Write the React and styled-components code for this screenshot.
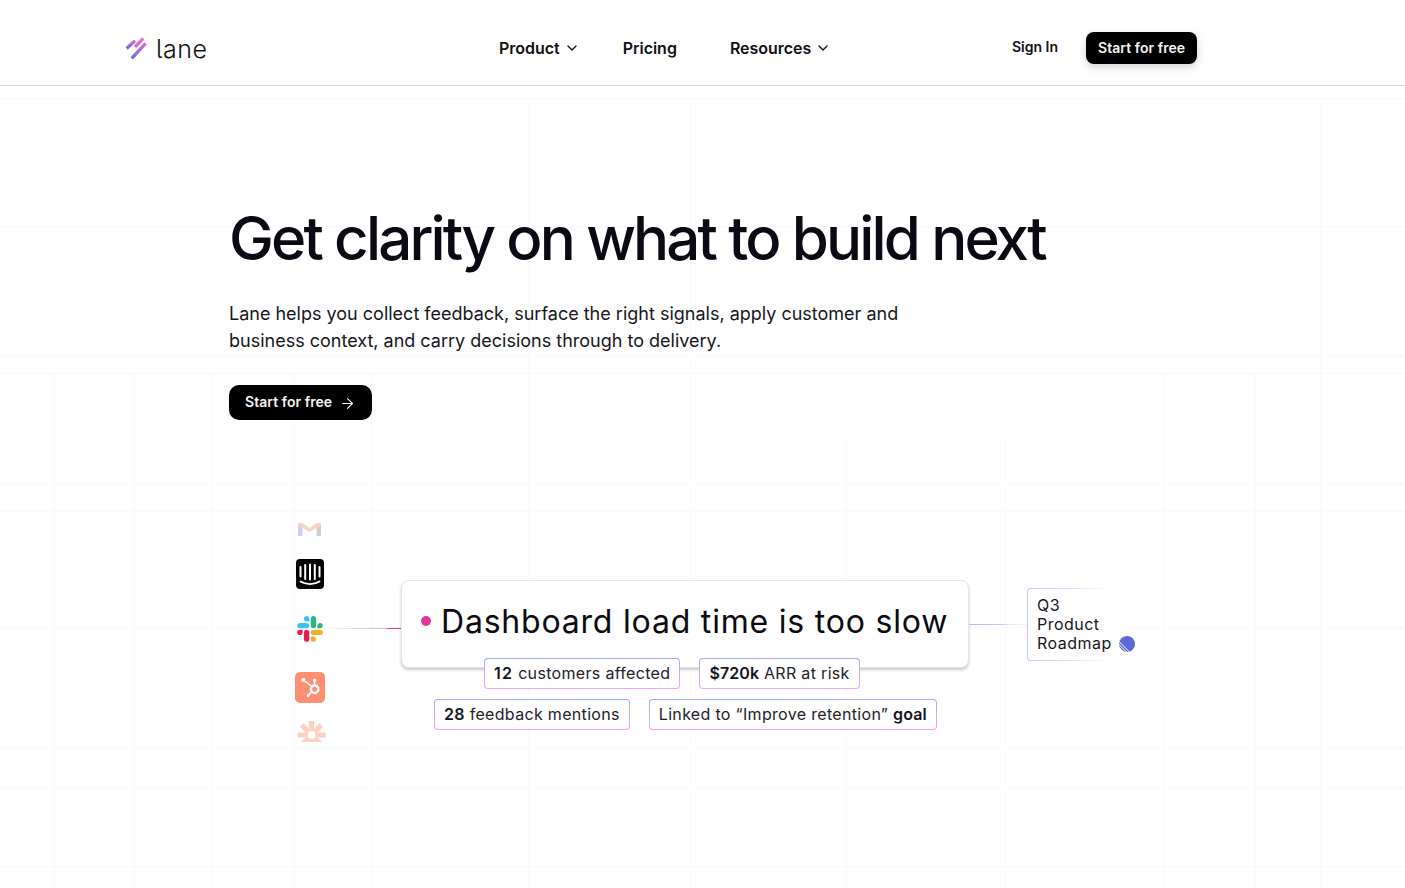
import React from 'react';
import styled, { createGlobalStyle } from 'styled-components';
import { ChevronDown, ArrowRight } from 'lucide-react';
import { SiHubspot } from 'react-icons/si';

const verticalLines = [
  { x: 54, from: 373 },
  { x: 134, from: 373 },
  { x: 212, from: 373 },
  { x: 294, from: 373 },
  { x: 371, from: 373 },
  { x: 528, from: 98 },
  { x: 690, from: 98 },
  { x: 846, from: 440 },
  { x: 1005, from: 440 },
  { x: 1163, from: 373 },
  { x: 1255, from: 373 },
  { x: 1320, from: 98 },
];
const horizontalLines = [98, 226, 355, 373, 483, 511, 627, 748, 787, 866];
const gridColor = '#fafafa';

const gridImages = [...verticalLines, ...horizontalLines]
  .map(() => `linear-gradient(${gridColor}, ${gridColor})`)
  .join(', ');
const gridSizes = [
  ...verticalLines.map(() => '1px 100%'),
  ...horizontalLines.map(() => '100% 1px'),
].join(', ');
const gridPositions = [
  ...verticalLines.map((l) => `${l.x}px ${l.from}px`),
  ...horizontalLines.map((y) => `0 ${y}px`),
].join(', ');

const GlobalStyle = createGlobalStyle`
  html, body {
    margin: 0;
    padding: 0;
    background: #fff;
  }
  body {
    font-family: Inter, "Liberation Sans", sans-serif;
    color: #0b0b12;
  }
`;

const Page = styled.div`
  width: 1405px;
  height: 888px;
  overflow: hidden;
  background-color: #fff;
  background-image: ${gridImages};
  background-size: ${gridSizes};
  background-position: ${gridPositions};
  background-repeat: no-repeat;
`;

const Nav = styled.nav`
  height: 86px;
  box-sizing: border-box;
  border-bottom: 1px solid #d9d9d9;
  background: #fff;
  display: flex;
  align-items: center;
  padding: 11px 0 0 125px;
`;

const Logo = styled.div`
  display: flex;
  align-items: center;
  gap: 8px;
  width: 374px;
`;

const LogoText = styled.span`
  font-family: Inter, sans-serif;
  font-feature-settings: 'cv05';
  font-size: 25px;
  font-weight: 300;
  letter-spacing: 0.5px;
  color: #111;
  line-height: 30px;
  padding-top: 2px;
`;

const NavLinks = styled.div`
  display: flex;
  align-items: center;
  gap: 43px;
  width: 513px;
`;

const NavLink = styled.a`
  display: flex;
  align-items: center;
  gap: 4px;
  font-size: 16px;
  font-weight: 600;
  letter-spacing: -0.02px;
  color: #111;
  margin-right: ${(p) => (p.$wide ? '10px' : '0')};
`;

const NavActions = styled.div`
  display: flex;
  align-items: center;
  gap: 28px;
`;

const SignIn = styled.a`
  font-size: 14px;
  font-weight: 600;
  color: #111;
  margin-top: -3px;
`;

const Button = styled.a`
  display: inline-flex;
  align-items: center;
  box-sizing: border-box;
  background: #000;
  color: #f4f4f4;
  font-size: 14px;
  font-weight: 600;
  letter-spacing: 0.05px;
`;

const NavButton = styled(Button)`
  height: 32px;
  padding: 0 12px 2px;
  border-radius: 8px;
  box-shadow: 0 3px 8px rgba(0, 0, 0, 0.18);
`;

const HeroButton = styled(Button)`
  height: 35px;
  padding: 0 16px 2px;
  border-radius: 10px;
  gap: 7px;
  svg {
    margin-top: 4px;
  }
`;

const Hero = styled.section`
  padding: 118px 0 0 229px;
`;

const Title = styled.h1`
  margin: 0;
  font-size: 60px;
  font-weight: 500;
  line-height: 68px;
  letter-spacing: -0.0475em;
  color: #0a0a14;
`;

const Lead = styled.p`
  margin: 28px 0 0;
  width: 720px;
  font-size: 18px;
  line-height: 27px;
  color: #16161d;
`;

const HeroAction = styled.div`
  margin-top: 31px;
`;

const Diagram = styled.section`
  display: flex;
  align-items: flex-start;
  margin-top: 103px;
  padding-left: 295px;
`;

const Sources = styled.div`
  width: 30px;
  height: 224px;
  position: relative;
`;

const SourceIcon = styled.div`
  position: absolute;
  left: ${(p) => p.$x}px;
  top: ${(p) => p.$y}px;
  display: flex;
`;

const HubTile = styled.div`
  width: 30px;
  height: 31px;
  border-radius: 5px;
  background: #ff8f73;
  color: #fff;
  display: flex;
  align-items: center;
  justify-content: center;
`;

const Link = styled.div`
  width: ${(p) => p.$w}px;
  height: 1px;
  margin-top: ${(p) => p.$top}px;
  background: ${(p) => p.$fill};
`;

const CardColumn = styled.div`
  width: 568px;
  padding-top: 57px;
`;

const Card = styled.div`
  height: 88px;
  box-sizing: border-box;
  background: #fff;
  border: 1px solid #e6e6e6;
  border-radius: 8px;
  box-shadow: 0 2px 3px rgba(0, 0, 0, 0.22);
  display: flex;
  align-items: center;
  padding: 0 10px 6px 19px;
  gap: 10px;
`;

const Dot = styled.span`
  width: 10px;
  height: 10px;
  border-radius: 50%;
  background: #e0359a;
`;

const CardTitle = styled.div`
  font-size: 32px;
  font-weight: 400;
  letter-spacing: 0.025em;
  white-space: nowrap;
  color: #0a0a0f;
`;

const ChipRow = styled.div`
  display: flex;
  gap: 19px;
  padding-left: ${(p) => p.$indent}px;
  margin-top: ${(p) => p.$top}px;
  position: relative;
`;

const Chip = styled.div`
  height: 31px;
  box-sizing: border-box;
  padding: 0 9px;
  line-height: 29px;
  font-size: 16px;
  letter-spacing: 0.02em;
  white-space: nowrap;
  color: #22222a;
  border: 1px solid transparent;
  border-radius: 4px;
  background:
    linear-gradient(#fff, #fff) padding-box,
    linear-gradient(#a3a8ff, #ff9ff2) border-box;
  b {
    font-weight: 600;
    letter-spacing: ${(p) => p.$strong || '0.32px'};
    color: #14141c;
  }
`;

const Roadmap = styled.div`
  width: 98px;
  height: 73px;
  box-sizing: border-box;
  margin-top: 65px;
  padding: 7px 0 0 9px;
  font-size: 16px;
  line-height: 19.2px;
  letter-spacing: 0.03em;
  color: #16161d;
  border: 1px solid transparent;
  border-radius: 4px;
  background:
    linear-gradient(#fff, #fff) padding-box,
    linear-gradient(90deg, #c6c3ff 0%, #e9e8ff 60%, #fff 85%) border-box;
`;

const RoadmapLine = styled.div`
  display: flex;
  align-items: center;
  gap: 7px;
  white-space: nowrap;
  svg {
    flex-shrink: 0;
  }
`;

function LaneMark() {
  return (
    <svg width="23" height="23" viewBox="0 0 23 23" fill="none">
      <defs>
        <linearGradient id="lane-a" x1="0" y1="1" x2="1" y2="0">
          <stop offset="0" stopColor="#6a6fe6" />
          <stop offset="1" stopColor="#e56cc8" />
        </linearGradient>
        <linearGradient id="lane-b" x1="0" y1="1" x2="1" y2="0">
          <stop offset="0" stopColor="#c76bd8" />
          <stop offset="1" stopColor="#ea6fc6" />
        </linearGradient>
      </defs>
      <g strokeWidth="3.300">
        <path d="M1.700 11.500 10 3.800" stroke="url(#lane-a)" />
        <path d="M10 9.800 18.300 1.400" stroke="url(#lane-b)" />
        <path d="M6.700 21.400 20.700 6.400" stroke="url(#lane-a)" />
      </g>
    </svg>
  );
}

function GmailIcon() {
  return (
    <svg width="23" height="13" viewBox="0 0 23 13">
      <rect x="0" y="0" width="4.500" height="13" fill="#d4c8fa" />
      <rect x="18.500" y="0" width="4.500" height="13" fill="#cfcfcf" />
      <path d="M0 0h4.500l7 5L18.500 0H23v2.500l-11.500 6.500L0 2.500z" fill="#fbd3c4" />
    </svg>
  );
}

function IntercomIcon() {
  return (
    <svg width="28" height="30" viewBox="0 0 28 30">
      <rect width="28" height="30" rx="4" fill="#000" />
      <g stroke="#fff" strokeWidth="2" strokeLinecap="round">
        <path d="M4.500 8v9.500" />
        <path d="M9.200 6v14" />
        <path d="M14 5.500v15" />
        <path d="M18.800 6v14" />
        <path d="M23.500 8v9.500" />
      </g>
      <path d="M4.500 22.500c5.500 3.400 13.500 3.400 19 0" stroke="#fff" strokeWidth="1.800" strokeLinecap="round" fill="none" />
    </svg>
  );
}

function SlackIcon() {
  return (
    <svg width="26" height="26" viewBox="0 0 127 127">
      <path fill="#E01E5A" d="M27.200 80c0 7.300-5.900 13.200-13.200 13.200C6.700 93.200.8 87.300.8 80c0-7.300 5.900-13.200 13.200-13.200h13.200V80zm6.600 0c0-7.300 5.900-13.200 13.200-13.200 7.300 0 13.200 5.900 13.200 13.200v33c0 7.300-5.900 13.200-13.200 13.200-7.300 0-13.200-5.900-13.200-13.200V80z" />
      <path fill="#36C5F0" d="M47 27c-7.300 0-13.200-5.900-13.200-13.200C33.800 6.500 39.700.6 47 .6c7.300 0 13.200 5.900 13.200 13.200V27H47zm0 6.700c7.300 0 13.200 5.900 13.200 13.200 0 7.300-5.900 13.200-13.200 13.200H13.900C6.600 60.100.7 54.200.7 46.900c0-7.300 5.900-13.200 13.200-13.200H47z" />
      <path fill="#2EB67D" d="M99.900 46.900c0-7.300 5.900-13.200 13.200-13.200 7.300 0 13.200 5.900 13.200 13.200 0 7.300-5.900 13.200-13.200 13.200H99.900V46.900zm-6.600 0c0 7.300-5.900 13.200-13.200 13.200-7.300 0-13.200-5.900-13.200-13.200V13.800C66.900 6.500 72.800.6 80.100.6c7.300 0 13.200 5.900 13.200 13.200v33.100z" />
      <path fill="#ECB22E" d="M80.100 99.800c7.300 0 13.200 5.900 13.200 13.200 0 7.300-5.900 13.200-13.200 13.200-7.300 0-13.200-5.900-13.200-13.200V99.800h13.200zm0-6.600c-7.300 0-13.200-5.900-13.200-13.200 0-7.300 5.900-13.200 13.200-13.200h33.100c7.300 0 13.200 5.900 13.200 13.200 0 7.300-5.900 13.200-13.200 13.200H80.100z" />
    </svg>
  );
}

function ZapierIcon() {
  return (
    <svg width="29" height="21" viewBox="0 0 29 21">
      <g stroke="#fbd0c0" strokeWidth="5">
        <path d="M14.500 0v28" />
        <path d="M0.500 14h28" />
        <path d="M4.600 4.100l19.800 19.800" />
        <path d="M24.400 4.100L4.600 23.900" />
      </g>
      <circle cx="14.500" cy="14" r="6.500" fill="#fbd0c0" />
      <rect x="10.800" y="10.300" width="7.400" height="7.400" rx="2.500" fill="#fff" />
    </svg>
  );
}

function LinearIcon() {
  return (
    <svg width="16" height="16" viewBox="0 0 16 16">
      <circle cx="8" cy="8" r="8" fill="#5e6ad2" />
      <g stroke="#fff" strokeWidth="1">
        <path d="M-1 4.500 11.500 17" />
        <path d="M-1 7.500 8.500 17" />
        <path d="M-1 10.500 5.500 17" />
      </g>
    </svg>
  );
}

export default function App() {
  return (
    <Page>
      <GlobalStyle />
      <Nav>
        <Logo>
          <LaneMark />
          <LogoText>lane</LogoText>
        </Logo>
        <NavLinks>
          <NavLink>Product <ChevronDown size={16} strokeWidth={2} /></NavLink>
          <NavLink $wide>Pricing</NavLink>
          <NavLink>Resources <ChevronDown size={16} strokeWidth={2} /></NavLink>
        </NavLinks>
        <NavActions>
          <SignIn>Sign In</SignIn>
          <NavButton>Start for free</NavButton>
        </NavActions>
      </Nav>

      <Hero>
        <Title>Get clarity on what to build next</Title>
        <Lead>
          Lane helps you collect feedback, surface the right signals, apply customer and
          business context, and carry decisions through to delivery.
        </Lead>
        <HeroAction>
          <HeroButton>Start for free <ArrowRight size={17} strokeWidth={1.6} /></HeroButton>
        </HeroAction>
      </Hero>

      <Diagram>
        <Sources>
          <SourceIcon $x={3} $y={0}><GmailIcon /></SourceIcon>
          <SourceIcon $x={1} $y={36}><IntercomIcon /></SourceIcon>
          <SourceIcon $x={2} $y={93}><SlackIcon /></SourceIcon>
          <SourceIcon $x={0} $y={149}><HubTile><SiHubspot size={19} /></HubTile></SourceIcon>
          <SourceIcon $x={2} $y={198}><ZapierIcon /></SourceIcon>
        </Sources>
        <Link $w={76} $top={105} $fill="linear-gradient(90deg, #fff 0%, #d6d6d6 45%, #c4c4c4 81%, #e0359a 82%, #e0359a 100%)" />
        <CardColumn>
          <Card>
            <Dot />
            <CardTitle>Dashboard load time is too slow</CardTitle>
          </Card>
          <ChipRow $indent={83} $top={-10}>
            <Chip $strong="1.3px"><b>12</b> customers affected</Chip>
            <Chip $strong="0.1px"><b>$720k</b> ARR at risk</Chip>
          </ChipRow>
          <ChipRow $indent={33} $top={10}>
            <Chip><b>28</b> feedback mentions</Chip>
            <Chip $strong="0.1px">Linked to “Improve retention” <b>goal</b></Chip>
          </ChipRow>
        </CardColumn>
        <Link $w={58} $top={101} $fill="linear-gradient(90deg, #b9b0ff 0%, #c9c4ff 55%, #e6e6e6 70%, #f4f4f4 100%)" />
        <Roadmap>
          <RoadmapLine>Q3</RoadmapLine>
          <RoadmapLine>Product</RoadmapLine>
          <RoadmapLine>Roadmap <LinearIcon /></RoadmapLine>
        </Roadmap>
      </Diagram>
    </Page>
  );
}
